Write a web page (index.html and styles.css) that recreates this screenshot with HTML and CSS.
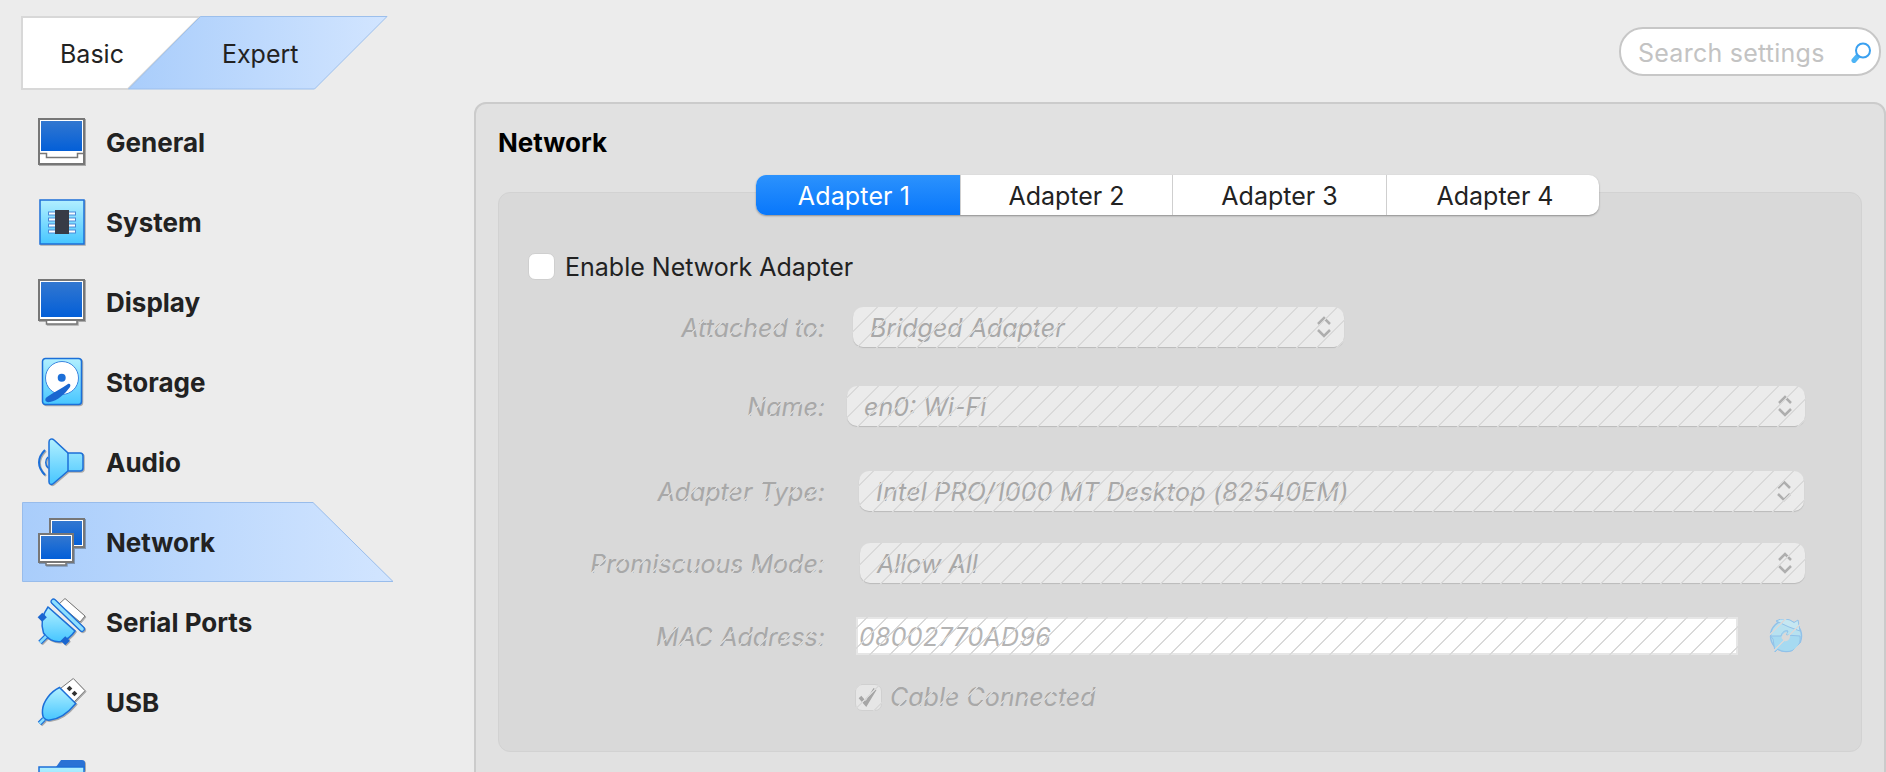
FILE: index.html
```html
<!DOCTYPE html>
<html lang="en">
<head>
<meta charset="utf-8">
<title>Network settings</title>
<link rel="stylesheet" href="styles.css">
</head>
<body>
<svg class="defs" aria-hidden="true">
  <defs>
    <linearGradient id="screen" x1="0" y1="0" x2="0" y2="1"><stop offset="0" stop-color="#3277d0"/><stop offset="1" stop-color="#035fd8"/></linearGradient>
    <linearGradient id="cyan" x1="0" y1="0" x2="0" y2="1"><stop offset="0" stop-color="#b2f0ff"/><stop offset="1" stop-color="#47c6ff"/></linearGradient>
    <linearGradient id="sel" x1="0" y1="0" x2="1" y2="0"><stop offset="0" stop-color="#a9cdfb"/><stop offset="1" stop-color="#d2e5ff"/></linearGradient>
  </defs>
</svg>
<div class="app">
  <aside class="side">
    <div class="mode">
      <svg class="mode-bg" width="368" height="74" viewBox="0 0 368 74" aria-hidden="true">
        <path d="M1 1H179L107 73H1Z" fill="#fff" stroke="#d8d8d8" stroke-width="2"/>
        <path d="M179.500 .5H366L293.500 73H107.500Z" fill="url(#sel)" stroke="#9cbfec"/>
      </svg>
      <span class="mode-basic">Basic</span>
      <span class="mode-expert">Expert</span>
    </div>
    <nav class="nav">
      <div class="item">
        <svg class="icon" viewBox="0 0 48 48" width="48" height="48"><rect x="1" y="1" width="45" height="45" fill="#fff" stroke="#777" stroke-width="2"/><rect x="3" y="3" width="41" height="30" fill="url(#screen)"/><path d="M0 35.500H8.500V39.500H39.500V35.500H47" fill="none" stroke="#777" stroke-width="1.500"/></svg>
        <span>General</span>
      </div>
      <div class="item">
        <svg class="icon" viewBox="0 0 48 48" width="48" height="48"><rect x="2" y="2" width="44" height="44" fill="url(#cyan)" stroke="#1c6fd8" stroke-width="1.500"/><g fill="#fff" stroke="#4a8ad8"><rect x="10.500" y="14" width="27" height="3"/><rect x="10.500" y="20" width="27" height="3"/><rect x="10.500" y="26" width="27" height="3"/><rect x="10.500" y="32" width="27" height="3"/></g><rect x="17" y="12" width="14" height="24" fill="#373b46"/></svg>
        <span>System</span>
      </div>
      <div class="item">
        <svg class="icon" viewBox="0 0 48 48" width="48" height="48"><path d="M8.500 42V46H39V42" fill="#fff" stroke="#777" stroke-width="1.500"/><rect x="1" y="2" width="45" height="40" fill="#fff" stroke="#777" stroke-width="2"/><rect x="3" y="4" width="41" height="35" fill="url(#screen)"/></svg>
        <span>Display</span>
      </div>
      <div class="item">
        <svg class="icon" viewBox="0 0 48 48" width="48" height="48"><rect x="4.500" y=".5" width="39" height="46" rx="3" fill="url(#cyan)" stroke="#1c6fd8" stroke-width="1.500"/><circle cx="24" cy="20" r="16.500" fill="#fff" stroke="#3a86e0" stroke-width="1"/><circle cx="23.700" cy="19.700" r="4" fill="#1c6fd8"/><path d="M30 26C32 25 33 27 32 29C27 36 19 43 12 44C7 45 6 41 9 39C15 35 24 30 30 26Z" fill="#1a66d0"/></svg>
        <span>Storage</span>
      </div>
      <div class="item">
        <svg class="icon" viewBox="0 0 48 48" width="48" height="48"><path d="M7 12C-1 20 -1 29 7 37" fill="none" stroke="#1c6fd8" stroke-width="2"/><path d="M10 19C7 22 7 27 10 30" fill="none" stroke="#1c6fd8" stroke-width="1.500"/><path d="M11 4C11 1 14 0 16 2L30 15H42C44 15 45 16 45 18V30C45 32 44 33 42 33H30L16 45C14 47 11 47 11 44Z" fill="url(#cyan)" stroke="#1c6fd8" stroke-width="1.500"/><path d="M30 15V33" stroke="#1c6fd8" stroke-width="1.500"/></svg>
        <span>Audio</span>
      </div>
      <div class="item item-on">
        <svg class="item-bg" width="372" height="80" viewBox="0 0 372 80" aria-hidden="true"><path d="M.5 .5H291L371 79.500H.5Z" fill="url(#sel)" stroke="#98bceb"/></svg>
        <svg class="icon" viewBox="0 0 48 48" width="48" height="48"><path d="M19 29V32H36" fill="#fff" stroke="#777"/><rect x="12" y="1" width="34" height="28" fill="#fff" stroke="#777" stroke-width="2"/><rect x="14" y="3" width="30" height="24" fill="url(#screen)"/><path d="M8 43V47H28V43" fill="#fff" stroke="#777" stroke-width="1.500"/><rect x="1" y="16" width="34" height="28" fill="#fff" stroke="#777" stroke-width="2"/><rect x="3" y="18" width="30" height="23" fill="url(#screen)"/></svg>
        <span>Network</span>
      </div>
      <div class="item">
        <svg class="icon" viewBox="0 0 48 48" width="48" height="48"><path d="M27 .5L47 18L42 24L21 6Z" fill="#fff" stroke="#777"/><path d="M10 9L37 33C33 39 29 42 23 43.500C16 44.500 9 41 5.500 35C3 27 4 17 10 9Z" fill="url(#cyan)" stroke="#1c6fd8" stroke-width="1.500"/><path d="M15.500 3.500L44 31" stroke="#1c6fd8" stroke-width="6" stroke-linecap="round"/><path d="M15.500 3.500L44 31" stroke="#8fe0ff" stroke-width="3.500" stroke-linecap="round"/><rect x="1" y="16" width="6.500" height="6.500" transform="rotate(45 4.250 19.250)" fill="#1a66d0"/><rect x="24" y="39.500" width="6.500" height="6.500" transform="rotate(45 27.250 42.750)" fill="#1a66d0"/><path d="M2 44.500L8 38.500" stroke="#1c6fd8" stroke-width="5"/><path d="M2 44.500L8 38.500" stroke="#86dcff" stroke-width="2.500"/></svg>
        <span>Serial Ports</span>
      </div>
      <div class="item">
        <svg class="icon" viewBox="0 0 48 48" width="48" height="48"><path d="M35.300 .5L47 12.700L35.300 24.700L22.700 10.300Z" fill="#fff" stroke="#777"/><rect x="29.500" y="8.500" width="4" height="4" transform="rotate(45 31.500 10.500)" fill="#333"/><rect x="34.500" y="13.500" width="4" height="4" transform="rotate(45 36.500 15.500)" fill="#333"/><path d="M21.500 9.500L37.700 25.500C30 35 22 41 12 42C6 43 4 39 4.500 32C5 24 12 14 21.500 9.500Z" fill="url(#cyan)" stroke="#1c6fd8" stroke-width="1.500"/><path d="M1.500 45.500L6 41" stroke="#1c6fd8" stroke-width="5"/><path d="M1.500 45.500L6 41" stroke="#86dcff" stroke-width="2.500"/></svg>
        <span>USB</span>
      </div>
      <div class="item">
        <svg class="icon" viewBox="0 0 48 48" width="48" height="48"><path d="M18 9L23 2H44C46 2 47 3 47 5V12H18Z" fill="#2a72d5"/><rect x="1" y="9" width="45" height="37" fill="url(#cyan)" stroke="#1c6fd8" stroke-width="1.500"/></svg>
      </div>
    </nav>
  </aside>
  <main class="content">
    <div class="top">
      <div class="search">
        <span class="search-text">Search settings</span>
        <svg class="search-icon" viewBox="0 0 22 22" width="22" height="22"><path d="M4 19.500L7.500 15.500" stroke="#4db4f5" stroke-width="5" stroke-linecap="round"/><circle cx="13" cy="9.500" r="7" fill="#fff" stroke="#3aa0f0" stroke-width="2"/></svg>
      </div>
    </div>
    <section class="panel">
      <h2 class="title">Network</h2>
      <div class="box">
        <div class="tabs">
          <div class="tab tab-1 tab-on">Adapter 1</div>
          <div class="tab tab-2">Adapter 2</div>
          <div class="tab tab-3">Adapter 3</div>
          <div class="tab tab-4">Adapter 4</div>
        </div>
        <label class="enable"><span class="check"></span><span class="enable-text">Enable Network Adapter</span></label>
        <div class="form">
          <div class="row row-attached">
            <span class="label">Attached to:</span>
            <div class="combo combo-short"><span>Bridged Adapter</span><svg class="updown" viewBox="0 0 16 24" width="16" height="24"><path d="M2 9L8 3L14 9M2 15L8 21L14 15" fill="none" stroke="#aeaeae" stroke-width="2.500"/></svg></div>
          </div>
          <div class="row row-name">
            <span class="label">Name:</span>
            <div class="combo"><span>en0: Wi-Fi</span><svg class="updown" viewBox="0 0 16 24" width="16" height="24"><path d="M2 9L8 3L14 9M2 15L8 21L14 15" fill="none" stroke="#aeaeae" stroke-width="2.500"/></svg></div>
          </div>
          <div class="row row-type">
            <span class="label">Adapter Type:</span>
            <div class="combo"><span>Intel PRO/1000 MT Desktop (82540EM)</span><svg class="updown" viewBox="0 0 16 24" width="16" height="24"><path d="M2 9L8 3L14 9M2 15L8 21L14 15" fill="none" stroke="#aeaeae" stroke-width="2.500"/></svg></div>
          </div>
          <div class="row row-mode">
            <span class="label">Promiscuous Mode:</span>
            <div class="combo"><span>Allow All</span><svg class="updown" viewBox="0 0 16 24" width="16" height="24"><path d="M2 9L8 3L14 9M2 15L8 21L14 15" fill="none" stroke="#aeaeae" stroke-width="2.500"/></svg></div>
          </div>
          <div class="row row-mac">
            <span class="label">MAC Address:</span>
            <div class="mac">08002770AD96</div>
            <svg class="refresh" viewBox="0 0 34 34" width="34" height="34"><circle cx="17" cy="17" r="15.500" fill="#b6e2f2" stroke="#8ec0ea" stroke-width="1.500"/><path d="M7 2A15.500 15.500 0 0 1 25 3.500L29 1L31 12L20 8Z" fill="#c4e8f4" stroke="#8ec0ea"/><path d="M1.500 17H12C13 13 16 11 19 12L17 16L31 17C32.500 26 26 33 17 32.500C14 32.500 11 31.500 9 30L6 33L4 20Z" fill="#a4dbf3" stroke="#8ec0ea"/><path d="M12.500 19C13 15 16 13 18 13L17 16L21 17C21 20 19 23 15 22Z" fill="#d9d9d9"/></svg>
          </div>
          <div class="row row-cable">
            <span class="check check-off"><svg viewBox="0 0 26 26" width="26" height="26"><path d="M5 13L11 20L20 5" fill="none" stroke="#a6a6a6" stroke-width="3.500"/></svg></span>
            <span class="cable-text">Cable Connected</span>
          </div>
        </div>
      </div>
    </section>
  </main>
</div>
</body>
</html>
```

FILE: styles.css
```css
* { box-sizing: border-box; }
html, body { margin: 0; height: 100%; }
body {
  width: 1886px;
  height: 772px;
  overflow: hidden;
  background: #ececec;
  color: #222;
  font-family: Inter, "Liberation Sans", sans-serif;
  font-size: 25px;
}
.defs { position: absolute; width: 0; height: 0; }
.app { display: grid; grid-template-columns: 474px 1412px; height: 772px; overflow: hidden; }

/* sidebar */
.side { display: flex; flex-direction: column; }
.mode { position: relative; width: 368px; height: 74px; margin: 16px 0 12px 21px; display: flex; align-items: center; }
.mode-bg { position: absolute; left: 0; top: 0; }
.mode-basic, .mode-expert { position: relative; top: 1px; }
.mode-basic { margin-left: 39px; }
.mode-expert { margin-left: 98px; }
.nav { display: flex; flex-direction: column; }
.item { position: relative; height: 80px; flex: none; display: flex; align-items: center; padding-left: 38px; gap: 20px; font-weight: 700; font-size: 26px; }
.item > span, .item > .icon { position: relative; }
.item-bg { position: absolute; left: 22px; top: 0; }
.icon { flex: none; filter: drop-shadow(1px 1px 0 rgba(0, 0, 0, .28)); overflow: visible; }

/* top */
.content { display: flex; flex-direction: column; min-width: 0; }
.top { height: 102px; flex: none; padding: 27px 5px 0 0; display: flex; justify-content: flex-end; align-items: flex-start; }
.search { width: 262px; height: 49px; background: #fff; border: 2px solid #c7c7c7; border-radius: 24px; display: flex; align-items: center; justify-content: space-between; padding: 2px 7px 0 17px; }
.search-text { color: #c3c3c3; letter-spacing: .25px; }
.search-icon { margin-top: -2px; }

/* panel */
.panel { flex: none; height: 720px; background: #e1e1e1; border: 2px solid #cbcbcb; border-radius: 12px; padding: 0 22px; }
.title { margin: 0; height: 88px; padding-top: 24px; line-height: 30px; font-size: 26px; font-weight: 700; color: #000; }
.box { position: relative; height: 560px; background: #d9d9d9; border: 1px solid #d2d2d2; border-radius: 12px; }
.tabs { display: flex; width: 843px; height: 40px; margin: -18px 0 0 257px; background: #fff; border-radius: 10px; box-shadow: 0 1px 2px rgba(0, 0, 0, .35); }
.tab { display: flex; align-items: center; justify-content: center; height: 40px; padding-top: 2px; border-left: 1px solid #cfcfcf; }
.tab-1 { width: 204px; padding-right: 8px; border-left: 0; border-radius: 10px 0 0 10px; letter-spacing: .15px; }
.tab-2 { width: 212px; }
.tab-3 { width: 214px; }
.tab-4 { width: 213px; padding-left: 4px; }
.tab-on { color: #fff; background: linear-gradient(#2c92fd, #0877fb); }
.enable { display: flex; align-items: center; gap: 10px; height: 28px; margin: 37px 0 0 29px; }
.enable-text { padding-top: 2px; }
.check { display: block; width: 27px; height: 27px; background: #fff; border: 1px solid #cfcfcf; border-radius: 7px; flex: none; }
.check-off { background: #e6e6e6; border-color: #d0d0d0; margin-left: 30px; }
.check-off svg { display: block; margin: -1px; }

/* disabled form */
.form { position: relative; margin-top: 27px; height: 420px; font-style: italic; color: #a8a8a8; }
.form::after { content: ""; position: absolute; inset: -2px 0 0 0; background: repeating-linear-gradient(135deg, #d9d9d9 0, #d9d9d9 1.4px, transparent 1.4px, transparent 14.14px); pointer-events: none; }
.row { display: flex; align-items: center; height: 40px; }
.label { width: 326px; flex: none; padding-top: 2px; text-align: right; }
.combo { display: flex; align-items: center; justify-content: space-between; height: 40px; padding: 0 12px 0 17px; background: #ebebeb; border-radius: 10px; box-shadow: 0 1px 1px rgba(0, 0, 0, .14); }
.combo > span { padding-top: 2px; }
.combo-short { width: 491px; margin-left: 28px; }
.row-name { margin-top: 39px; }
.row-name .combo { width: 958px; margin-left: 22px; }
.row-type { margin-top: 45px; }
.row-type .combo { width: 945px; margin-left: 34px; letter-spacing: .23px; }
.row-mode { margin-top: 32px; }
.row-mode .combo { width: 945px; margin-left: 35px; }
.row-mac { margin-top: 34px; height: 38px; }
.mac { width: 882px; height: 38px; margin-left: 31px; padding-left: 1px; line-height: 36px; letter-spacing: .3px; background: #fff; border: 2px solid #e6e6e6; color: #b4b4b4; }
.refresh { margin-left: 31px; opacity: .95; }
.row-cable { margin-top: 28px; height: 28px; padding-left: 326px; gap: 8px; }
.updown { flex: none; }
```
